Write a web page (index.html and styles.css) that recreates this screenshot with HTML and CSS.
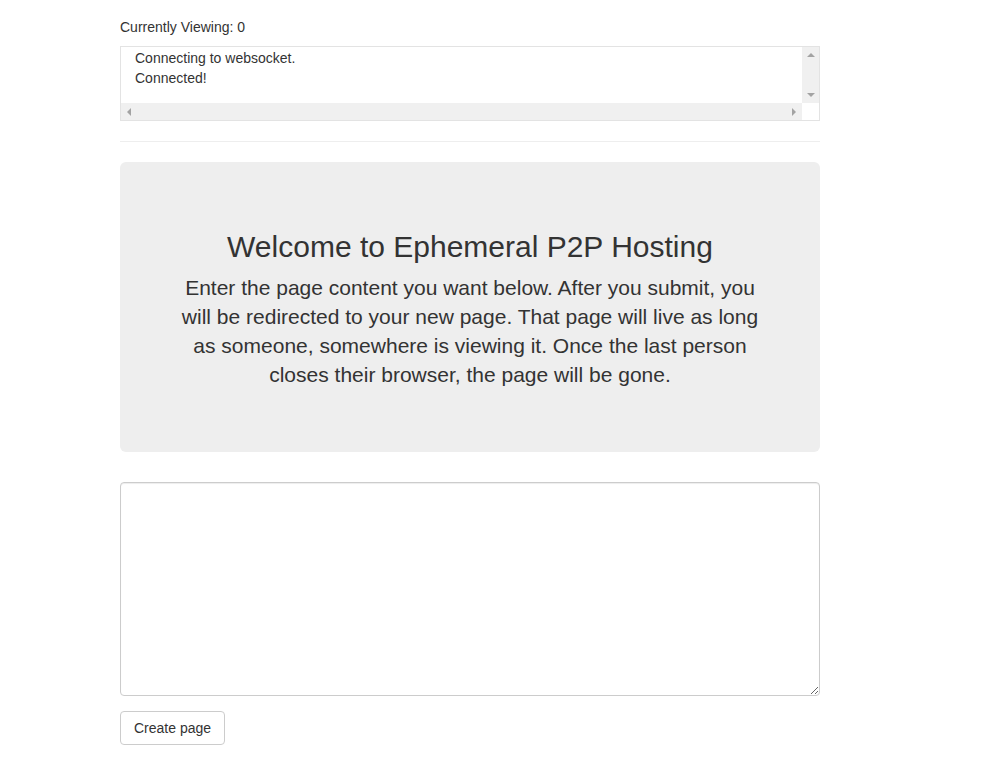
FILE: index.html
```html
<!DOCTYPE html>
<html>
<head>
<meta charset="utf-8">
<title>Ephemeral P2P Hosting</title>
<link rel="stylesheet" href="styles.css">
</head>
<body>
<div class="container">
  <div class="viewers">Currently Viewing: 0</div>
  <div class="log">
    <div class="log-content">
      <div>Connecting to websocket.</div>
      <div>Connected!</div>
    </div>
    <div class="vbar">
      <span class="arrow arrow-up"></span>
      <span class="arrow arrow-down"></span>
    </div>
    <div class="hbar">
      <span class="arrow arrow-left"></span>
      <span class="arrow arrow-right"></span>
    </div>
    <div class="corner"></div>
  </div>
  <hr class="divider">
  <div class="jumbotron">
    <h2 class="title">Welcome to Ephemeral P2P Hosting</h2>
    <p class="lead">Enter the page content you want below. After you submit, you will be redirected to your new page. That page will live as long as someone, somewhere is viewing it. Once the last person closes their browser, the page will be gone.</p>
  </div>
  <form class="create-form" onsubmit="return false;">
    <textarea class="content-input"></textarea>
    <button type="submit" class="btn">Create page</button>
  </form>
</div>
</body>
</html>
```

FILE: styles.css
```css
* { box-sizing: border-box; }
html, body { margin: 0; padding: 0; background: #fff; }
body {
  font-family: "Liberation Sans", Arial, Helvetica, sans-serif;
  font-size: 14px;
  line-height: 20px;
  color: #333;
}
.container {
  width: 700px;
  margin-left: 120px;
  padding-top: 16px;
}
.viewers {
  height: 20px;
  padding-top: 1px;
  margin-bottom: 10px;
}
.log {
  height: 75px;
  border: 1px solid #e3e3e3;
  display: grid;
  grid-template-columns: 1fr 17px;
  grid-template-rows: 1fr 17px;
}
.log-content {
  padding: 1px 0 0 14px;
  white-space: nowrap;
  overflow: hidden;
}
.vbar {
  background: #f0f0f0;
  display: flex;
  flex-direction: column;
  justify-content: space-between;
  align-items: center;
  padding: 6px 0 6px;
}
.hbar {
  background: #f0f0f0;
  display: flex;
  justify-content: space-between;
  align-items: center;
  padding: 0 6px;
}
.corner { background: #fff; }
.arrow { width: 0; height: 0; display: block; }
.arrow-up { border-left: 4px solid transparent; border-right: 4px solid transparent; border-bottom: 4px solid #a3a3a3; }
.arrow-down { border-left: 4px solid transparent; border-right: 4px solid transparent; border-top: 4px solid #a3a3a3; }
.arrow-left { border-top: 4px solid transparent; border-bottom: 4px solid transparent; border-right: 4px solid #a3a3a3; }
.arrow-right { border-top: 4px solid transparent; border-bottom: 4px solid transparent; border-left: 4px solid #a3a3a3; }
.divider {
  margin: 20px 0;
  border: 0;
  border-top: 1px solid #eee;
}
.jumbotron {
  background: #eee;
  border-radius: 6px;
  padding: 48px 60px;
  margin-bottom: 30px;
  text-align: center;
}
.title {
  margin: 20px 0 10px;
  font-size: 30px;
  font-weight: 400;
  line-height: 33px;
}
.lead {
  margin: 0 0 15px;
  font-size: 21px;
  line-height: 29px;
  font-weight: 400;
}
.create-form { display: flex; flex-direction: column; align-items: flex-start; }
.content-input {
  display: block;
  width: 100%;
  height: 214px;
  border: 1px solid #ccc;
  border-radius: 4px;
  box-shadow: inset 0 1px 1px rgba(0,0,0,.075);
  padding: 6px 12px;
  font-family: inherit;
  font-size: 14px;
  color: #555;
  margin: 0 0 15px;
}
.btn {
  font-family: inherit;
  font-size: 14px;
  line-height: 20px;
  color: #333;
  background: #fff;
  border: 1px solid #ccc;
  border-radius: 4px;
  padding: 6px 13px;
  cursor: pointer;
}
```
